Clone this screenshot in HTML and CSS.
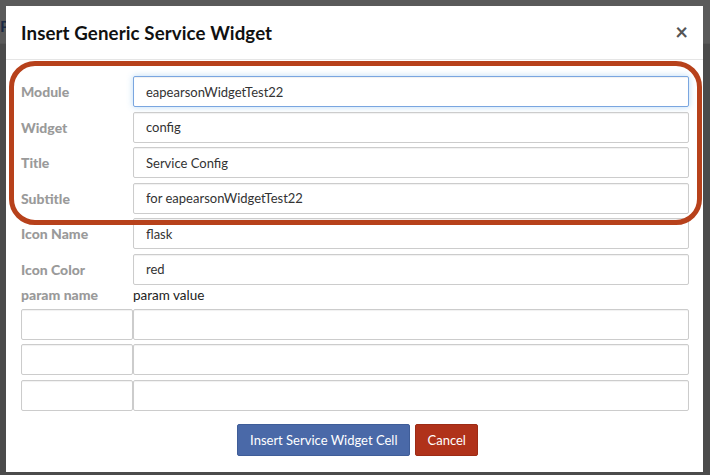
FILE: index.html
```html
<!DOCTYPE html>
<html>
<head>
<meta charset="utf-8">
<link rel="stylesheet" href="styles.css">
</head>
<body>
<div class="backdrop">
  <span class="bg-p">P</span>
</div>
<div class="modal">
  <div class="modal-header">
    <h4 class="modal-title">Insert Generic Service Widget</h4>
    <span class="close">×</span>
  </div>
  <div class="modal-body">
    <div class="form-row">
      <label class="lbl">Module</label>
      <input class="inp focus" type="text" value="eapearsonWidgetTest22">
    </div>
    <div class="form-row">
      <label class="lbl">Widget</label>
      <input class="inp" type="text" value="config">
    </div>
    <div class="form-row">
      <label class="lbl">Title</label>
      <input class="inp" type="text" value="Service Config">
    </div>
    <div class="form-row">
      <label class="lbl">Subtitle</label>
      <input class="inp" type="text" value="for eapearsonWidgetTest22">
    </div>
    <div class="form-row">
      <label class="lbl">Icon Name</label>
      <input class="inp" type="text" value="flask">
    </div>
    <div class="form-row">
      <label class="lbl">Icon Color</label>
      <input class="inp" type="text" value="red">
    </div>
    <div class="param-head">
      <span class="lbl">param name</span>
      <span class="pv">param value</span>
    </div>
    <div class="param-row">
      <input class="inp pname" type="text">
      <input class="inp" type="text">
    </div>
    <div class="param-row">
      <input class="inp pname" type="text">
      <input class="inp" type="text">
    </div>
    <div class="param-row">
      <input class="inp pname" type="text">
      <input class="inp" type="text">
    </div>
    <div class="buttons">
      <button class="btn btn-primary">Insert Service Widget Cell</button>
      <button class="btn btn-danger">Cancel</button>
    </div>
    <div class="annotation"></div>
  </div>
</div>
</body>
</html>
```
FILE: styles.css
```css
html, body {
  margin: 0;
  padding: 0;
}
body {
  width: 710px;
  height: 475px;
  overflow: hidden;
  position: relative;
  background: #4b4b4b;
  font-family: Lato, "Open Sans", "Liberation Sans", sans-serif;
  color: #333;
}
.backdrop {
  position: absolute;
  left: 0;
  top: 0;
  width: 710px;
  height: 43px;
  background: #5a5a5a;
  border-bottom: 1px solid #555;
}
.bg-p {
  position: absolute;
  left: 0;
  top: 16px;
  font-size: 16px;
  font-weight: bold;
  color: #1c2a45;
}
.modal {
  position: absolute;
  left: 6px;
  top: 6px;
  width: 697px;
  height: 466px;
  background: #fff;
  box-sizing: border-box;
}
.modal-header {
  height: 54px;
  border-bottom: 1px solid #e5e5e5;
  box-sizing: border-box;
  padding: 0 14px 0 15px;
  display: flex;
  align-items: center;
  justify-content: space-between;
}
.modal-title {
  margin: 0;
  font-size: 18.7px;
  font-weight: bold;
  color: #111;
  letter-spacing: 0.1px;
}
.close {
  font-size: 22px;
  font-weight: bold;
  color: #555;
  line-height: 1;
  margin-top: -2px;
  margin-right: 1px;
}
.modal-body {
  position: relative;
  padding: 16px 14px 0 15px;
}
.form-row {
  display: flex;
  align-items: center;
  height: 31px;
  margin-bottom: 4.5px;
}
.lbl {
  width: 112px;
  flex: none;
  font-size: 14px;
  font-weight: 900;
  color: #9a9a9a;
}
.inp {
  flex: 1;
  height: 31px;
  box-sizing: border-box;
  border: 1px solid #ccc;
  border-radius: 2px;
  padding: 0 12px;
  font-family: Lato, "Open Sans", "Liberation Sans", sans-serif;
  font-size: 13px;
  color: #333;
  background: #fff;
  margin: 0;
  min-width: 0;
  box-shadow: inset 0 1px 1px rgba(0,0,0,0.06);
}
.inp.focus {
  border-color: #7aa6e0;
  box-shadow: inset 0 1px 1px rgba(0,0,0,0.06), 0 0 6px rgba(102,175,233,0.45);
  outline: none;
}
.param-head {
  display: flex;
  align-items: center;
  height: 20px;
  margin-top: -4.5px;
  margin-bottom: 4px;
}
.pv {
  font-size: 13.5px;
  color: #222;
}
.param-row {
  display: flex;
  height: 31px;
  margin-bottom: 4.5px;
}
.pname {
  flex: none;
  width: 112px;
}
.buttons {
  display: flex;
  justify-content: center;
  gap: 5px;
  margin-top: 13px;
  padding-left: 5px;
}
.btn {
  height: 32px;
  border: 1px solid transparent;
  border-radius: 2px;
  font-family: Lato, "Open Sans", "Liberation Sans", sans-serif;
  font-size: 13px;
  color: #fff;
  padding: 0 12px;
}
.btn-primary {
  background: #4a69a8;
  border-color: #3f5d98;
}
.btn-danger {
  background: #b0321a;
  border-color: #9d2b15;
  padding: 0 11px;
}
.annotation {
  position: absolute;
  left: 3px;
  top: 1px;
  width: 693px;
  height: 164px;
  box-sizing: border-box;
  border: 5px solid #b7411b;
  border-radius: 26px;
  pointer-events: none;
}
```
